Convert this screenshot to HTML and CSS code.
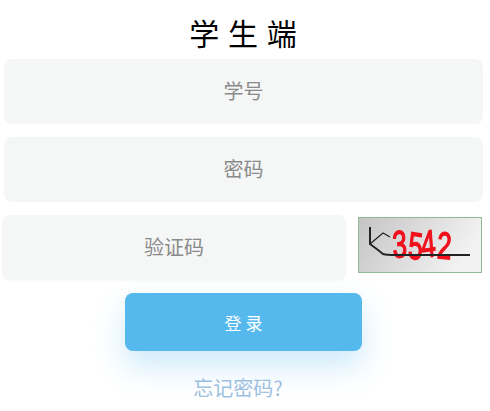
FILE: index.html
```html
<!DOCTYPE html>
<html lang="zh-CN">
<head>
    <meta charset="UTF-8">
    <meta name="viewport" content="width=device-width, initial-scale=1.0">
    <title>学生端</title>
    <link rel="stylesheet" href="styles.css">
</head>
<body>
    <div class="container">
        <div class="title">学 生 端</div>
        <div class="field">学号</div>
        <div class="field">密码</div>
        <div class="code-row">
            <div class="field code-field">验证码</div>
            <div class="captcha">
                <svg width="122" height="54" viewBox="0 0 122 54">
                    <defs>
                        <linearGradient id="captcha-bg" x1="0" y1="0" x2="1" y2="0.3">
                            <stop offset="0" stop-color="#c4c4c4"/>
                            <stop offset="1" stop-color="#f2f2f2"/>
                        </linearGradient>
                    </defs>
                    <rect width="122" height="54" fill="url(#captcha-bg)"/>
                    <text x="34" y="40" rotate="-4 6 -6 4" textLength="58" lengthAdjust="spacingAndGlyphs" class="captcha-text">3542</text>
                    <path d="M11 9 L11 26 Q18 31 24 36 Q28 37 36 37 L111 37" class="captcha-line"/>
                    <path d="M11 26 L24 15 L31 19" class="captcha-thin"/>
                </svg>
            </div>
        </div>
        <button class="login">登 录</button>
        <div class="forgot">忘记密码?</div>
    </div>
</body>
</html>
```

FILE: styles.css
```css
body {
    font-family: "Noto Sans CJK SC", "Liberation Sans", sans-serif;
    background-color: #FFFFFF;
    margin: 0;
    overflow: hidden;
}
.container {
    display: flex;
    flex-direction: column;
    height: 411px;
    padding: 12px 0 0 0;
    box-sizing: border-box;
}
.title {
    width: 490px;
    text-align: center;
    font-size: 30px;
    word-spacing: 2px;
    line-height: 40px;
    color: #000000;
    margin-bottom: 7px;
    padding-right: 4px;
    box-sizing: border-box;
}
.field {
    display: flex;
    align-items: center;
    justify-content: center;
    width: 479px;
    height: 65px;
    padding-bottom: 2px;
    box-sizing: border-box;
    margin: 0 0 13px 4px;
    background-color: #F5F7F7;
    border-radius: 8px;
    font-size: 20px;
    color: #8A8A8A;
}
.code-row {
    display: flex;
    align-items: flex-start;
}
.code-field {
    width: 344px;
    margin: 0 0 13px 2px;
    box-shadow: 0 1px 2px rgba(0, 0, 0, 0.03);
}
.captcha {
    width: 122px;
    height: 54px;
    margin: 2px 0 0 12px;
    border: 1px solid #8FBC8F;
}
.captcha svg {
    display: block;
    filter: blur(0.4px);
}
.captcha-text {
    font-family: "Liberation Sans", sans-serif;
    font-size: 38px;
    fill: #F0101C;
    stroke: #F0101C;
    stroke-width: 1.4;
}
.captcha-line {
    fill: none;
    stroke: #222222;
    stroke-width: 2;
}
.captcha-thin {
    fill: none;
    stroke: #222222;
    stroke-width: 1.2;
}
.login {
    display: block;
    width: 237px;
    height: 58px;
    margin-left: 125px;
    background-color: #55B9EE;
    color: #FFFFFF;
    border: none;
    border-radius: 8px;
    font-family: inherit;
    font-size: 17px;
    box-shadow: 0 15px 30px rgba(85, 185, 238, 0.3);
}
.forgot {
    width: 226px;
    margin: 22px 0 0 125px;
    text-align: center;
    font-size: 20px;
    line-height: 30px;
    color: #9DC0E0;
}
```
